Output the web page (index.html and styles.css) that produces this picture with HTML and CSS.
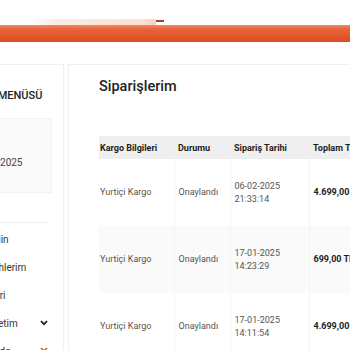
FILE: index.html
```html
<!DOCTYPE html>
<html lang="tr">
<head>
	<meta charset="UTF-8">
	<title>Siparişlerim</title>
	<link rel="stylesheet" href="styles.css">
</head>
<body>
    <header class="topbar">
        <div class="topbar-top">
            <span class="topbar-glow"></span>
            <span class="topbar-dash"></span>
        </div>
        <div class="topbar-line"></div>
    </header>

    <main class="account">
        <aside class="side-menu">
            <h2 class="side-title">HESAP MENÜSÜ</h2>
            <div class="member-box">
                <span class="member-date">06-02-2025</span>
            </div>
            <hr class="side-divider">
            <ul class="side-list">
                <li><span>Hoş Geldin</span></li>
                <li><span>Özel Tarihlerim</span></li>
                <li><span>Ödemeleri</span></li>
                <li>
                    <span>Kart Yönetim</span>
                    <svg class="side-icon" width="8" height="6" viewBox="0 0 8 6"><path d="M1 1.2 L4 4.2 L7 1.2" fill="none" stroke="#222" stroke-width="1.8"/></svg>
                </li>
                <li class="side-exit">
                    <span>Gece Modo</span>
                    <svg class="side-icon" width="8" height="8" viewBox="0 0 8 8"><path d="M1 1 L7 7 M7 1 L1 7" fill="none" stroke="#e2582a" stroke-width="1.6"/></svg>
                </li>
            </ul>
        </aside>

        <section class="orders">
            <h1 class="orders-title">Siparişlerim</h1>
            <table class="orders-table">
                <colgroup>
                    <col style="width:75px">
                    <col style="width:56px">
                    <col style="width:79px">
                    <col style="width:120px">
                </colgroup>
                <thead>
                    <tr>
                        <th>Kargo Bilgileri</th>
                        <th>Durumu</th>
                        <th>Sipariş Tarihi</th>
                        <th>Toplam Tutar</th>
                    </tr>
                </thead>
                <tbody>
                    <tr>
                        <td>Yurtiçi Kargo</td>
                        <td>Onaylandı</td>
                        <td>06-02-2025<br>21:33:14</td>
                        <td class="total">4.699,00 TL</td>
                    </tr>
                    <tr>
                        <td>Yurtiçi Kargo</td>
                        <td>Onaylandı</td>
                        <td>17-01-2025<br>14:23:29</td>
                        <td class="total">699,00 TL</td>
                    </tr>
                    <tr>
                        <td>Yurtiçi Kargo</td>
                        <td>Onaylandı</td>
                        <td>17-01-2025<br>14:11:54</td>
                        <td class="total">4.699,00 TL</td>
                    </tr>
                </tbody>
            </table>
        </section>
    </main>
</body>
</html>
```

FILE: styles.css
```css
        body {
        	margin: 0;
        	background: #fff;
        	font-family: Roboto, "Liberation Sans", sans-serif;
        	color: #333;
        	overflow: hidden;
        	width: 350px;
        	height: 350px;
        }
        .topbar {
        	padding-top: 19px;
        }
        .topbar-top {
        	display: flex;
        	align-items: flex-start;
        	height: 6px;
        }
        .topbar-glow {
        	margin-left: 30px;
        	width: 126px;
        	height: 6px;
        	background: linear-gradient(to right, rgba(252,228,216,0), #fdebe2 20%, #fbe0d2 90%, #f8d2bf);
        }
        .topbar-dash {
        	margin-top: 1px;
        	width: 8px;
        	height: 2px;
        	background: #a8412a;
        }
        .topbar-line {
        	height: 17px;
        	background: linear-gradient(to bottom, #f08a66 0, #e8643a 25%, #e3582b 65%, #d84f22 100%);
        }
        .account {
        	display: flex;
        	align-items: flex-start;
        	gap: 4px;
        	margin-top: 22px;
        }
        .side-menu {
        	flex: none;
        	width: 120px;
        	margin-left: -56px;
        	height: 320px;
        	box-sizing: border-box;
        	border: 1px solid #f0f0f0;
        	padding: 0 15px;
        }
        .side-title {
        	margin: 23px 0 0;
        	font-size: 11px;
        	line-height: 16px;
        	font-weight: 500;
        	color: #222;
        	white-space: nowrap;
        }
        .member-box {
        	margin: 14px -4px 0 -4px;
        	height: 75px;
        	box-sizing: border-box;
        	padding: 37px 0 0 15px;
        	background: #fafafa;
        	border: 1px solid #f2f2f2;
        }
        .member-date {
        	display: block;
        	font-size: 10px;
        	line-height: 14px;
        	color: #444;
        }
        .side-divider {
        	margin: 29px 1px 0 0;
        	border: none;
        	border-top: 1px solid #efefef;
        }
        .side-list {
        	list-style: none;
        	margin: 2px 0 0;
        	padding: 0;
        }
        .side-list li {
        	display: flex;
        	align-items: center;
        	justify-content: space-between;
        	height: 28px;
        	font-size: 10px;
        	color: #333;
        	white-space: nowrap;
        }
        .side-icon {
        	flex: none;
        }
        .side-exit {
        	color: #e2582a;
        }
        .orders {
        	flex: 1;
        	min-width: 0;
        	height: 320px;
        	border-left: 1px solid #f0f0f0;
        	border-top: 1px solid #f0f0f0;
        	padding-left: 30px;
        	overflow: hidden;
        }
        .orders-title {
        	margin: 13px 0 0;
        	font-size: 14.5px;
        	line-height: 18px;
        	font-weight: 500;
        	color: #222;
        }
        .orders-table {
        	margin-top: 40px;
        	width: 330px;
        	table-layout: fixed;
        	border-collapse: collapse;
        	font-size: 9px;
        }
        .orders-table th {
        	height: 23px;
        	padding: 0 4px;
        	text-align: left;
        	font-weight: 700;
        	color: #222;
        	background: #efefef;
        	white-space: nowrap;
        }
        .orders-table td {
        	height: 67px;
        	padding: 0 4px;
        	line-height: 13px;
        	color: #555;
        	border-left: 1px solid #f4f4f4;
        	white-space: nowrap;
        }
        .orders-table th:first-child,
        .orders-table td:first-child {
        	padding-left: 1px;
        	border-left: none;
        }
        .orders-table tbody tr:nth-child(2) td {
        	background: #fafafa;
        }
        .orders-table .total {
        	font-weight: 700;
        	color: #222;
        }
```
